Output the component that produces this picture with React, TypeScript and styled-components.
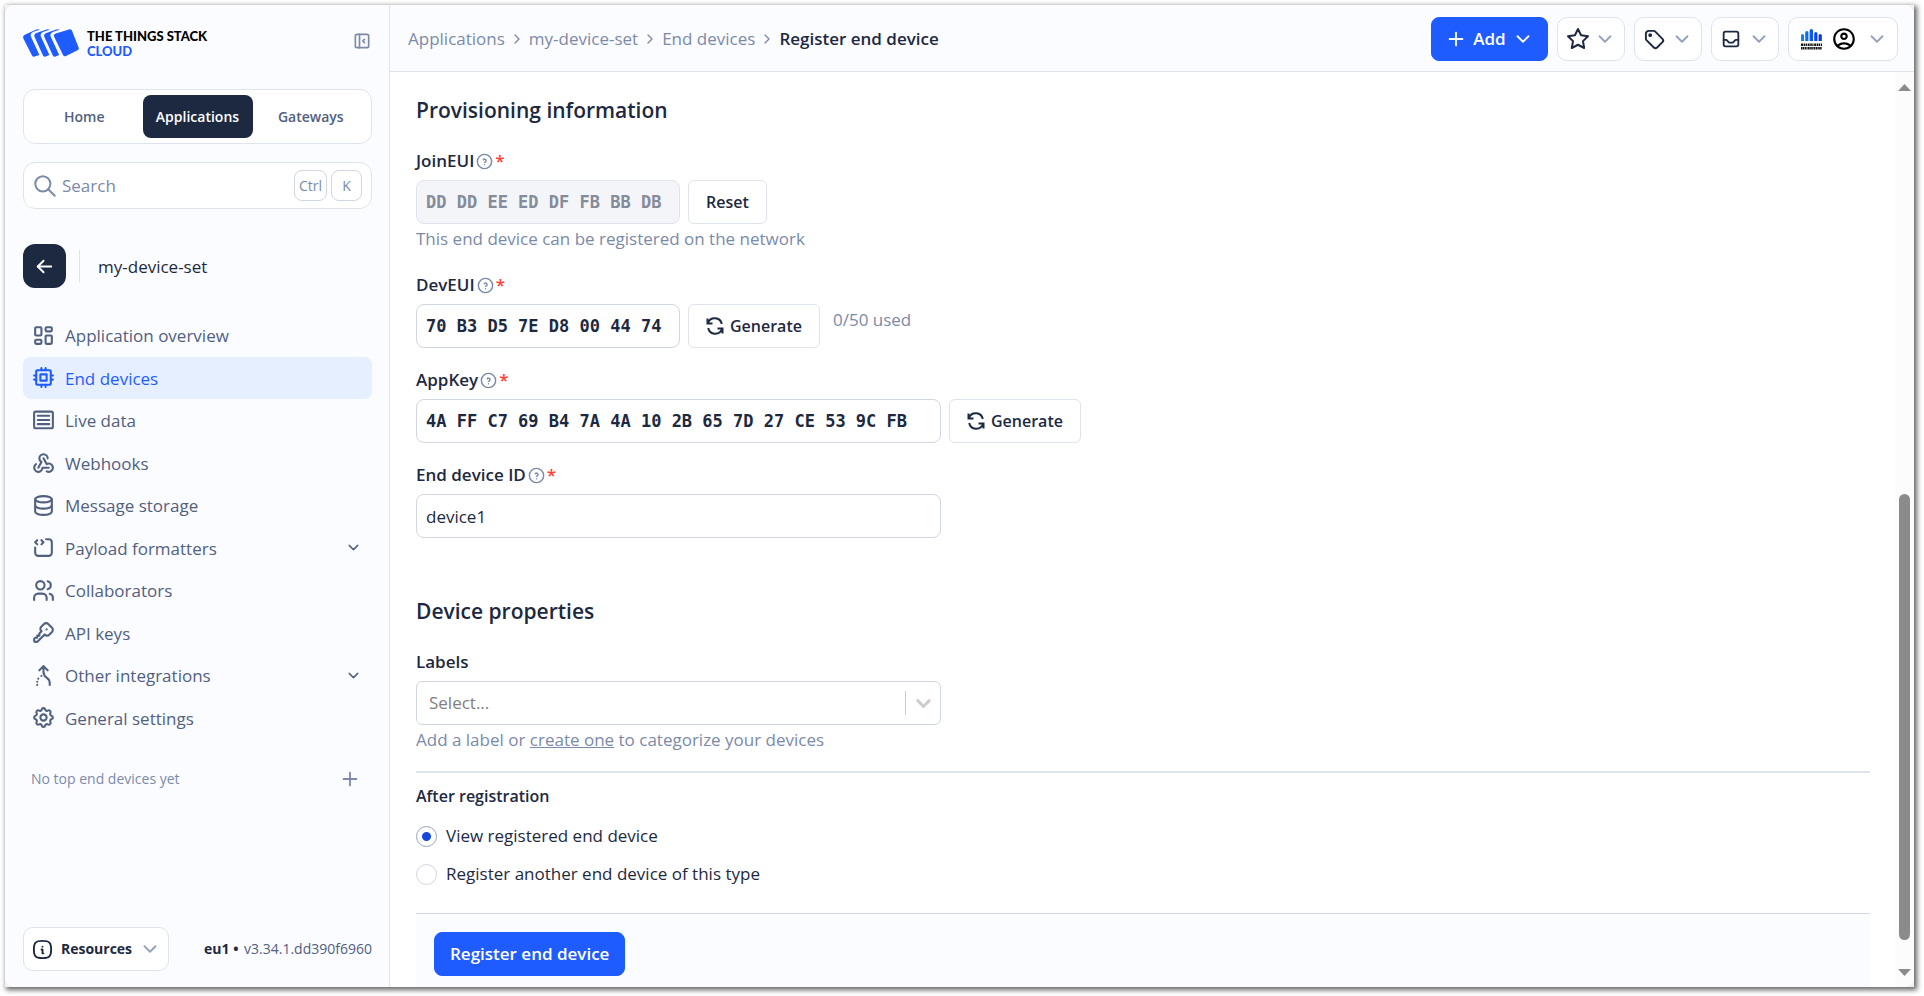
import React, { useState } from 'react';
import styled, { createGlobalStyle, css } from 'styled-components';
import {
  TbArrowLeft, TbChevronDown, TbChevronRight, TbCpu, TbDatabase, TbInbox,
  TbInfoSquareRounded, TbKey, TbLayoutDashboard, TbLayoutSidebarLeftCollapse, TbPlus,
  TbSearch, TbSettings, TbSourceCode, TbStar, TbTag, TbUsers, TbWebhook, TbHelpCircle,
} from 'react-icons/tb';
import { MdOutlineAccountCircle } from 'react-icons/md';

const c = {
  ink: '#1d2940',
  slate: '#51607f',
  muted: '#7b8aa8',
  chevron: '#94a1b8',
  line: '#dfe3ec',
  inputLine: '#d0d6e2',
  blue: '#1f5cff',
  pale: '#fbfcff',
  tint: '#e6efff',
  red: '#ff4136',
};

const GlobalStyle = createGlobalStyle`
  *, *::before, *::after { box-sizing: border-box; }
  body { margin: 0; background: #fff; }
  body, button, input, select { font-family: "Open Sans", "Noto Sans", sans-serif; font-size: 17px; line-height: 24px; }
  button { cursor: pointer; }
  a { color: inherit; text-decoration: none; }
  svg { flex: none; display: block; }
`;

const Page = styled.div`
  height: 100vh;
  padding: 5px 10px 9px 5px;
  color: ${c.ink};
`;

const Frame = styled.div`
  height: 100%;
  background: #f2f3f5;
  box-shadow: 2px 2px 5px 1px rgba(0, 0, 0, 0.6);
`;

const Shell = styled.div`
  height: 100%;
  display: grid;
  grid-template-columns: 385px minmax(0, 1fr);
  border-radius: 10px;
  overflow: hidden;
  background: #fff;
`;

const Sidebar = styled.aside`
  display: flex;
  flex-direction: column;
  min-height: 0;
  padding: 24px 17px 16px 18px;
  background: ${c.pale};
  border-right: 1px solid ${c.line};
`;

const Brand = styled.div`
  display: flex;
  align-items: flex-start;
  height: 28px;
  gap: 8px;
`;

const BrandName = styled.div`
  flex: 1;
  font: 900 13px/15px Lato, sans-serif;
  color: #000;
  span { display: block; color: ${c.blue}; }
`;

const IconButton = styled.button`
  display: grid;
  place-items: center;
  height: 24px;
  padding: 0;
  border: 0;
  background: none;
  color: ${c.muted};
`;

const Tabs = styled.nav`
  display: grid;
  grid-template-columns: 1fr 110px 1fr;
  gap: 3px;
  height: 55px;
  margin-top: 32px;
  padding: 5px;
  border: 1px solid ${c.line};
  border-radius: 12px;
  background: #fff;
`;

const Tab = styled.a<{ $active?: boolean }>`
  display: grid;
  place-items: center;
  border-radius: 8px;
  font-size: 14px;
  font-weight: 600;
  color: ${p => (p.$active ? '#fff' : c.slate)};
  background: ${p => (p.$active ? c.ink : 'transparent')};
`;

const SearchBox = styled.label`
  display: flex;
  align-items: center;
  gap: 4px;
  height: 47px;
  margin-top: 18px;
  padding: 0 9px 0 8px;
  border: 1px solid ${c.line};
  border-radius: 12px;
  background: #fff;
  color: ${c.muted};
  input {
    flex: 1;
    min-width: 0;
    padding: 0;
    border: 0;
    outline: 0;
    background: none;
    color: ${c.ink};
  }
  input::placeholder { color: ${c.muted}; opacity: 1; }
`;

const Kbd = styled.kbd`
  display: grid;
  place-items: center;
  min-width: 31px;
  height: 31px;
  padding: 0 4px;
  border: 1px solid ${c.inputLine};
  border-radius: 8px;
  font: 14px/20px "Open Sans", sans-serif;
`;

const Context = styled.div`
  display: flex;
  align-items: center;
  margin-top: 35px;
`;

const BackLink = styled.a`
  display: grid;
  place-items: center;
  width: 43px;
  height: 44px;
  border-radius: 12px;
  background: ${c.ink};
  color: #fff;
`;

const ContextName = styled.span`
  margin-left: 13px;
  padding: 5px 0 3px 18px;
  border-left: 1px solid ${c.line};
`;

const NavList = styled.ul`
  display: flex;
  flex-direction: column;
  height: 425px;
  margin: 26px 0 0;
  padding: 0;
  list-style: none;
  li { flex: 1; display: flex; }
`;

const NavLink = styled.a<{ $active?: boolean }>`
  flex: 1;
  display: flex;
  align-items: center;
  gap: 9px;
  padding: 0 10px 0 8px;
  border-radius: 8px;
  color: ${p => (p.$active ? c.blue : c.slate)};
  background: ${p => (p.$active ? c.tint : 'transparent')};
  span { flex: 1; padding-top: 2px; }
`;

const EmptyTop = styled.div`
  display: flex;
  align-items: center;
  justify-content: space-between;
  margin-top: 28px;
  padding: 0 11px 0 8px;
  font-size: 14px;
  color: ${c.muted};
`;

const SideFooter = styled.div`
  display: flex;
  align-items: center;
  justify-content: space-between;
  margin-top: auto;
  font-size: 14px;
  color: ${c.slate};
  b { margin-right: 2px; color: ${c.ink}; }
`;

const box = css`
  display: flex;
  align-items: center;
  justify-content: center;
  height: 44px;
  border: 1px solid ${c.line};
  border-radius: 8px;
  background: #fff;
  color: ${c.ink};
`;

const ResourcesButton = styled.button`
  ${box}
  gap: 7px;
  width: 146px;
  padding: 0 8px;
  border-radius: 10px;
  font-size: 14px;
  font-weight: 700;
`;

const Main = styled.div`
  display: flex;
  flex-direction: column;
  min-width: 0;
  min-height: 0;
`;

const Header = styled.header`
  display: flex;
  align-items: center;
  justify-content: space-between;
  height: 67px;
  padding: 2px 16px 0 18px;
  background: ${c.pale};
  border-bottom: 1px solid ${c.line};
`;

const Crumbs = styled.nav`
  display: flex;
  align-items: center;
  gap: 4px;
  color: ${c.muted};
  b { color: ${c.ink}; font-weight: 600; }
`;

const Actions = styled.div`
  display: flex;
  gap: 9px;
`;

const MenuButton = styled.button<{ $width?: number }>`
  ${box}
  justify-content: space-between;
  width: ${p => p.$width || 68}px;
  padding: 0 8px;
  border-radius: 10px;
`;

const AccountButton = styled(MenuButton)`
  padding: 0 9px 0 12px;
`;

const PrimaryButton = styled.button`
  ${box}
  gap: 6px;
  padding: 0 15px;
  border-color: ${c.blue};
  background: ${c.blue};
  color: #fff;
  font-weight: 600;
`;

const AddButton = styled(PrimaryButton)`
  width: 117px;
  padding: 0;
`;

const Body = styled.div`
  flex: 1;
  display: flex;
  min-height: 0;
`;

const Form = styled.form`
  flex: 1;
  display: flex;
  flex-direction: column;
  min-width: 0;
  padding: 22px 25px 0 26px;
`;

const Heading = styled.h2`
  margin: 0 0 23px;
  font-size: 21px;
  line-height: 32px;
  font-weight: 600;
`;

const Fields = styled.section`
  display: flex;
  flex-direction: column;
  gap: 20px;
  & + & { margin-top: 57px; }
`;

const FieldBlock = styled.div`
  display: flex;
  flex-direction: column;
  align-items: flex-start;
`;

const Label = styled.label`
  display: flex;
  align-items: center;
  margin-bottom: 7px;
  font-weight: 600;
  svg { margin-left: 1px; color: ${c.muted}; }
  i { margin-left: 1px; font-style: normal; color: ${c.red}; }
`;

const Row = styled.div`
  display: flex;
  gap: 8px;
`;

const TextInput = styled.input<{ $width: number; $mono?: boolean }>`
  width: ${p => p.$width}px;
  height: 44px;
  padding: 0 9px;
  border: 1px solid ${c.inputLine};
  border-radius: 8px;
  outline: 0;
  background: #fff;
  color: ${c.ink};
  ${p => p.$mono && css`font-family: "DejaVu Sans Mono", monospace; font-weight: 700;`}
  &:disabled { background: #f3f5f9; color: #858b98; border-color: ${c.line}; }
`;

const PlainButton = styled.button`
  ${box}
  gap: 6px;
  padding: 0 17px;
  border-radius: 6px;
  font-size: 16px;
  font-weight: 600;
`;

const Used = styled.span`
  margin: 4px 0 0 5px;
  color: ${c.muted};
`;

const Hint = styled.p`
  margin: 1px 0 0;
  line-height: 28px;
  color: ${c.muted};
  a { text-decoration: underline; }
`;

const SelectWrap = styled.div`
  position: relative;
  width: 525px;
  select {
    appearance: none;
    width: 100%;
    height: 44px;
    padding: 0 12px;
    border: 1px solid ${c.inputLine};
    border-radius: 6px;
    background: #fff;
    color: #808080;
  }
`;

const SelectMark = styled.span`
  position: absolute;
  top: 10px;
  right: 6px;
  display: flex;
  align-items: center;
  height: 24px;
  padding-left: 6px;
  border-left: 1px solid #ccc;
  color: #ccc;
  pointer-events: none;
`;

const Choices = styled.fieldset`
  margin: 17px 0 0;
  padding: 11px 0 0;
  border: 0;
  border-top: 2px solid ${c.line};
  legend { float: left; width: 100%; margin-bottom: 9px; padding: 0; font-size: 16px; font-weight: 600; }
`;

const Choice = styled.label`
  clear: both;
  display: flex;
  align-items: center;
  gap: 9px;
  height: 38px;
  input {
    appearance: none;
    width: 21px;
    height: 21px;
    margin: 0;
    border: 1px solid ${c.inputLine};
    border-radius: 50%;
    background: #fff;
  }
  input:checked {
    border-color: #97a4bd;
    background: radial-gradient(circle, #1648e0 4px, #fff 5px);
  }
`;

const SubmitBar = styled.div`
  display: flex;
  margin-top: auto;
  padding: 18px 18px 11px;
  border-top: 1px solid ${c.inputLine};
  background: ${c.pale};
`;

const ScrollTrack = styled.div`
  display: flex;
  flex-direction: column;
  align-items: center;
  width: 19px;
  padding: 12px 0 11px;
  background: #fcfcfc;
`;

const Thumb = styled.div`
  width: 11px;
  height: 50%;
  margin: auto 0 29px;
  border-radius: 6px;
  background: #8b8b8b;
`;

const Triangle = ({ down }: { down?: boolean }) => (
  <svg width="13" height="7" viewBox="0 0 13 7" fill="#8b8b8b">
    <path d={down ? 'M0 0h13L6.500 7z' : 'M0 7h13L6.500 0z'} />
  </svg>
);

const StackLogo = () => (
  <svg width="56" height="28" viewBox="0 0 56 28" fill={c.blue}>
    <path d="M33.500 4.200 46 .4q2-.6 2.900 1.200l6.700 16.800q.8 2-1.100 2.900L43 27q-2 .9-3-1.100L31 7.500q-1.100-2.300 2.500-3.300z" />
    <path d="M36.500.8 31 2.500q-5.200 1.800-2.900 6L36.200 26l-3.700 1.600q-1.800.6-2.700-1.200L21.500 8.300q-1.400-3 1.800-4.200l10-3.500q2-.6 3.200.2z" />
    <path d="M26.700.8 21.200 2.500q-5.200 1.800-2.900 6L26.400 26l-3.700 1.600q-1.800.6-2.700-1.200L11.700 8.300q-1.400-3 1.800-4.200l10-3.500q2-.6 3.200.2z" />
    <path d="M16.700.8 11.200 2.500q-5.200 1.800-2.900 6L16.400 26l-4.700 1.600q-1.800.6-2.700-1.200L.5 9.700q-1.400-3 1.800-4.200L13.500.6q2-.6 3.200.2z" />
  </svg>
);

const TenantLogo = () => (
  <svg width="21" height="21" viewBox="0 0 21 21">
    <defs>
      <linearGradient id="tenant" x1="0" x2="1">
        <stop offset="0" stopColor="#0a84ff" />
        <stop offset="1" stopColor="#0a2fe0" />
      </linearGradient>
    </defs>
    <path
      fill="url(#tenant)"
      d="M0 12V6.500a1.500 1.500 0 0 1 3 0V12zM4.200 12V3.500a1.600 1.600 0 0 1 3.200 0V12zM8.600 12V1.800a1.700 1.700 0 0 1 3.400 0V12zM13.200 12V4.500a1.600 1.600 0 0 1 3.200 0V12zM17.600 12V6.500a1.600 1.600 0 0 1 3.200 0V12z"
    />
    <g stroke="#111" strokeWidth="2.400">
      <path d="M0 15.700h21" strokeDasharray="2 .6 1.600 .5 1.200 .7" />
      <path d="M0 19.300h21" strokeDasharray="1 .4 1.700 .5 1.600 .4" />
    </g>
  </svg>
);

const LinesIcon = () => (
  <svg width="25" height="25" viewBox="0 0 24 24" fill="none" stroke="currentColor" strokeWidth="2" strokeLinecap="round">
    <rect x="3" y="3.500" width="18" height="16" rx="1.500" />
    <path d="M6.500 7.500h11M6.500 11.500h11M6.500 15.500h11" />
  </svg>
);

const MergeIcon = () => (
  <svg width="25" height="25" viewBox="0 0 24 24" fill="none" stroke="currentColor" strokeWidth="2" strokeLinecap="round" strokeLinejoin="round">
    <path d="M8 7l4-4 4 4M12 3v5.400a6.700 6.700 0 0 0 3 5.600 6.700 6.700 0 0 1 3 5.600V21M6 21v.01M6 18v.01M7 15v.01M10 12.500v.01" />
  </svg>
);

const SyncIcon = () => (
  <svg width="18" height="18" viewBox="0 0 18 18" fill="none" stroke="currentColor" strokeWidth="2">
    <path d="M1.500 1.500v5h5M2 6A7.200 7.200 0 0 1 15.800 7M16.500 16.500v-5h-5M16 12A7.200 7.200 0 0 1 2.200 11" />
  </svg>
);

const navItems = [
  { icon: TbLayoutDashboard, text: 'Application overview' },
  { icon: TbCpu, text: 'End devices', active: true },
  { icon: LinesIcon, text: 'Live data' },
  { icon: TbWebhook, text: 'Webhooks' },
  { icon: TbDatabase, text: 'Message storage' },
  { icon: TbSourceCode, text: 'Payload formatters', more: true },
  { icon: TbUsers, text: 'Collaborators' },
  { icon: TbKey, text: 'API keys' },
  { icon: MergeIcon, text: 'Other integrations', more: true },
  { icon: TbSettings, text: 'General settings' },
];

type FieldProps = {
  id: string;
  label: string;
  value: string;
  width: number;
  mono?: boolean;
  disabled?: boolean;
  hint?: string;
  children?: React.ReactNode;
};

const Field = ({ id, label, value, width, mono, disabled, hint, children }: FieldProps) => (
  <FieldBlock>
    <Label htmlFor={id}>
      {label}
      <TbHelpCircle size={19} strokeWidth={1.800} />
      <i>*</i>
    </Label>
    <Row>
      <TextInput id={id} defaultValue={value} $width={width} $mono={mono} disabled={disabled} />
      {children}
    </Row>
    {hint && <Hint>{hint}</Hint>}
  </FieldBlock>
);

const MenuChevron = () => <TbChevronDown size={22} color={c.chevron} />;

export default function App() {
  const [next, setNext] = useState('view');
  return (
    <Page>
      <GlobalStyle />
      <Frame>
        <Shell>
          <Sidebar>
            <Brand>
              <StackLogo />
              <BrandName>THE THINGS STACK<span>CLOUD</span></BrandName>
              <IconButton aria-label="Collapse sidebar"><TbLayoutSidebarLeftCollapse size={20} /></IconButton>
            </Brand>
            <Tabs>
              <Tab href="#home">Home</Tab>
              <Tab href="#applications" $active>Applications</Tab>
              <Tab href="#gateways">Gateways</Tab>
            </Tabs>
            <SearchBox>
              <TbSearch size={26} strokeWidth={1.800} />
              <input type="text" placeholder="Search" aria-label="Search" />
              <Kbd>Ctrl</Kbd>
              <Kbd>K</Kbd>
            </SearchBox>
            <Context>
              <BackLink href="#back" aria-label="Back"><TbArrowLeft size={23} /></BackLink>
              <ContextName>my-device-set</ContextName>
            </Context>
            <NavList>
              {navItems.map(({ icon: Icon, text, active, more }) => (
                <li key={text}>
                  <NavLink href="#nav" $active={active}>
                    <Icon size={25} />
                    <span>{text}</span>
                    {more && <TbChevronDown size={17} />}
                  </NavLink>
                </li>
              ))}
            </NavList>
            <EmptyTop>
              No top end devices yet
              <IconButton aria-label="Add top end device"><TbPlus size={22} /></IconButton>
            </EmptyTop>
            <SideFooter>
              <ResourcesButton>
                <TbInfoSquareRounded size={23} />
                Resources
                <MenuChevron />
              </ResourcesButton>
              <span><b>eu1 •</b> v3.34.1.dd390f6960</span>
            </SideFooter>
          </Sidebar>
          <Main>
            <Header>
              <Crumbs>
                <a href="#applications">Applications</a>
                <TbChevronRight size={16} />
                <a href="#set">my-device-set</a>
                <TbChevronRight size={16} />
                <a href="#devices">End devices</a>
                <TbChevronRight size={16} />
                <b>Register end device</b>
              </Crumbs>
              <Actions>
                <AddButton><TbPlus size={22} />Add<TbChevronDown size={22} /></AddButton>
                <MenuButton aria-label="Bookmarks"><TbStar size={24} /><MenuChevron /></MenuButton>
                <MenuButton aria-label="Labels"><TbTag size={23} /><MenuChevron /></MenuButton>
                <MenuButton aria-label="Notifications"><TbInbox size={22} /><MenuChevron /></MenuButton>
                <AccountButton aria-label="Account" $width={110}>
                  <TenantLogo />
                  <MdOutlineAccountCircle size={26} color="#000" />
                  <MenuChevron />
                </AccountButton>
              </Actions>
            </Header>
            <Body>
              <Form onSubmit={e => e.preventDefault()}>
                <Fields>
                  <div>
                    <Heading>Provisioning information</Heading>
                    <Field id="join" label="JoinEUI" value="DD DD EE ED DF FB BB DB" width={264} mono disabled hint="This end device can be registered on the network">
                      <PlainButton type="button">Reset</PlainButton>
                    </Field>
                  </div>
                  <Field id="dev" label="DevEUI" value="70 B3 D5 7E D8 00 44 74" width={264} mono>
                    <PlainButton type="button"><SyncIcon />Generate</PlainButton>
                    <Used>0/50 used</Used>
                  </Field>
                  <Field id="key" label="AppKey" value="4A FF C7 69 B4 7A 4A 10 2B 65 7D 27 CE 53 9C FB" width={525} mono>
                    <PlainButton type="button"><SyncIcon />Generate</PlainButton>
                  </Field>
                  <Field id="device-id" label="End device ID" value="device1" width={525} />
                </Fields>
                <Fields>
                  <div>
                    <Heading>Device properties</Heading>
                    <FieldBlock>
                      <Label htmlFor="labels">Labels</Label>
                      <SelectWrap>
                        <select id="labels" defaultValue=""><option value="">Select...</option></select>
                        <SelectMark><TbChevronDown size={23} strokeWidth={3} /></SelectMark>
                      </SelectWrap>
                      <Hint>Add a label or <a href="#create">create one</a> to categorize your devices</Hint>
                    </FieldBlock>
                  </div>
                </Fields>
                <Choices>
                  <legend>After registration</legend>
                  <Choice>
                    <input type="radio" name="next" checked={next === 'view'} onChange={() => setNext('view')} />
                    View registered end device
                  </Choice>
                  <Choice>
                    <input type="radio" name="next" checked={next === 'another'} onChange={() => setNext('another')} />
                    Register another end device of this type
                  </Choice>
                </Choices>
                <SubmitBar>
                  <PrimaryButton type="submit">Register end device</PrimaryButton>
                </SubmitBar>
              </Form>
              <ScrollTrack>
                <Triangle />
                <Thumb />
                <Triangle down />
              </ScrollTrack>
            </Body>
          </Main>
        </Shell>
      </Frame>
    </Page>
  );
}
